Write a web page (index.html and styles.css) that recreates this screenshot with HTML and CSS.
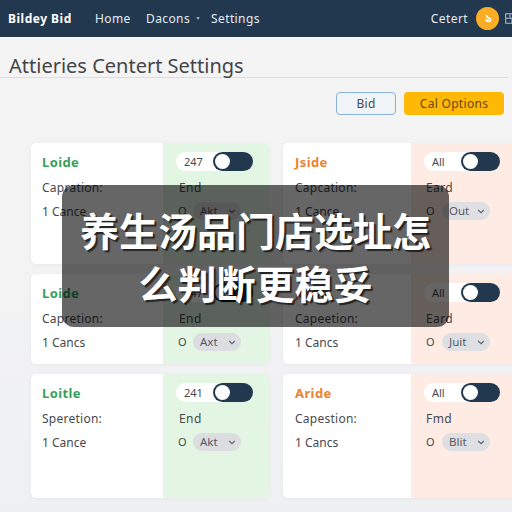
FILE: index.html
```
<!DOCTYPE html>
<html lang="zh">
<head>
<meta charset="utf-8">
<title>Attieries Centert Settings</title>
<link rel="stylesheet" href="styles.css">
</head>
<body>
<div class="page">
  <nav class="nav">
    <span class="brand">Bildey Bid</span>
    <span class="link home">Home</span>
    <span class="link decons">Dacons</span>
    <svg class="nav-caret" viewBox="0 0 5 4"><path d="M.3 .4H4.7L2.5 3.6Z" fill="#b9c9d9"/></svg>
    <span class="link">Settings</span>
    <span class="link account">Cetert</span>
    <span class="avatar"><svg viewBox="0 0 10 10"><path d="M3.2 1.6 5.4 4.2M5.2 4.4C7 4 7.9 5.2 7.6 6.4 7.1 8.1 4.2 8 2.9 6.2L5 6.2" fill="none" stroke="#fff" stroke-width="1.5" stroke-linecap="round"/></svg></span>
    <svg class="grid-icon" viewBox="0 0 11 11"><path d="M10.5 .7H.7V10.3H10.5M.7 5.3H10.5M5 .7V5.3M7 5.3V10.3" fill="none" stroke="#a9bccd" stroke-width="1.1"/></svg>
  </nav>
  <h1 class="title"><span>Attieries Centert Settings</span></h1>
  <div class="actions">
    <button class="btn outline">Bid</button>
    <button class="btn solid">Cal Options</button>
  </div>
  <main class="cards">
    <section class="card green">
      <div class="info"><h2>Loide</h2><p>Capration:</p><p class="count">1 Cance</p></div>
      <div class="side"><div class="switch"><span>247</span><i class="toggle"></i></div><p>End</p>
        <div class="pick"><b>O</b><span class="pill">Akt<svg viewBox="0 0 8 5"><path d="M1.2 1 4 3.7 6.8 1"/></svg></span></div></div>
    </section>
    <section class="card orange">
      <div class="info"><h2>Jside</h2><p>Capcation:</p><p class="count">1 Cance</p></div>
      <div class="side"><div class="switch"><span>All</span><i class="toggle"></i></div><p>Eard</p>
        <div class="pick"><b>O</b><span class="pill">Out<svg viewBox="0 0 8 5"><path d="M1.2 1 4 3.7 6.8 1"/></svg></span></div></div>
    </section>
    <section class="card green">
      <div class="info"><h2>Loide</h2><p>Capretion:</p><p class="count">1 Cancs</p></div>
      <div class="side"><div class="switch"><span>247</span><i class="toggle"></i></div><p>End</p>
        <div class="pick"><b>O</b><span class="pill">Axt<svg viewBox="0 0 8 5"><path d="M1.2 1 4 3.7 6.8 1"/></svg></span></div></div>
    </section>
    <section class="card orange">
      <div class="info"><h2>Jside</h2><p>Capeetion:</p><p class="count">1 Cancs</p></div>
      <div class="side"><div class="switch"><span>All</span><i class="toggle"></i></div><p>Eard</p>
        <div class="pick"><b>O</b><span class="pill">Juit<svg viewBox="0 0 8 5"><path d="M1.2 1 4 3.7 6.8 1"/></svg></span></div></div>
    </section>
    <section class="card green">
      <div class="info"><h2>Loitle</h2><p>Speretion:</p><p class="count">1 Cance</p></div>
      <div class="side"><div class="switch"><span>241</span><i class="toggle"></i></div><p>End</p>
        <div class="pick"><b>O</b><span class="pill">Akt<svg viewBox="0 0 8 5"><path d="M1.2 1 4 3.7 6.8 1"/></svg></span></div></div>
    </section>
    <section class="card orange">
      <div class="info"><h2>Aride</h2><p>Capestion:</p><p class="count">1 Cancs</p></div>
      <div class="side"><div class="switch"><span>All</span><i class="toggle"></i></div><p>Fmd</p>
        <div class="pick"><b>O</b><span class="pill">Blit<svg viewBox="0 0 8 5"><path d="M1.2 1 4 3.7 6.8 1"/></svg></span></div></div>
    </section>
  </main>
  <div class="caption">养生汤品门店选址怎<br>么判断更稳妥</div>
</div>
</body>
</html>
```
FILE: styles.css
```
* { box-sizing: border-box; }
body { margin: 0; font-family: "Noto Sans", sans-serif; }
h1, h2, p { margin: 0; }
.page {
  position: relative; width: 512px; height: 512px; overflow: hidden;
  background: linear-gradient(#f4f4f4, #f3f3f4 50%, #eff0f2);
  color: #48494d;
}
.nav {
  display: flex; align-items: center; height: 37px; padding: 0 0 0 8px;
  background: #22384f; color: #e4ebf2; font-size: 12px; white-space: nowrap;
}
.nav > * { flex: none; }
.brand { width: 87px; font-weight: 700; font-size: 12px; letter-spacing: .5px; color: #fff; }
.link { letter-spacing: .4px; }
.home { width: 51px; }
.decons { width: 50px; }
.nav-caret { width: 4px; height: 3px; margin-right: 11px; }
.account { margin-left: auto; }
.avatar {
  display: flex; align-items: center; justify-content: center;
  width: 23px; height: 23px; margin: 0 6px 0 8px; border-radius: 50%; background: #fbae25;
}
.avatar svg { width: 10px; height: 10px; }
.grid-icon { width: 11px; height: 11px; margin-right: -4px; }
.title {
  height: 41px; margin-right: 4px; padding: 14px 0 0 9px;
  border-bottom: 1px solid #dcddde;
  font-weight: 400; font-size: 20px; line-height: 30px; color: #454547; white-space: nowrap;
}
.actions { display: flex; justify-content: flex-end; gap: 8px; margin-top: 14px; padding-right: 8px; }
.btn {
  height: 23px; padding: 0; border-radius: 4px; font: 12px "Noto Sans", sans-serif;
  letter-spacing: .3px; line-height: 21px;
}
.outline { width: 60px; border: 1px solid #8bb1d8; background: #f1f4f7; color: #444b55; }
.solid { width: 100px; border: 0; background: #feb906; color: #684817; }
.cards {
  display: grid; grid-template-columns: 238px 238px; grid-template-rows: 121px 90px 124px;
  gap: 10px 14px; margin: 28px 0 0 31px;
}
.card {
  display: flex; overflow: hidden; border-radius: 5px; background: #fff;
  box-shadow: 0 1px 4px rgba(40, 50, 60, .05); font-size: 12px; line-height: 20px; white-space: nowrap;
}
.info { width: 132px; padding: 9px 0 0 11px; }
.side { flex: 1; padding: 9px 0 0 13px; background: #e3f5e3; }
.orange .info { width: 128px; padding-left: 12px; }
.orange .side { background: #feebe4; }
h2 { height: 26px; font-size: 13px; line-height: 20px; letter-spacing: .4px; color: #35a15a; }
.orange h2 { color: #ec8130; }
.info p { height: 24px; letter-spacing: .25px; }
.info .count { letter-spacing: 0; }
.side p { height: 24px; padding-left: 3px; letter-spacing: .4px; }
.orange .side p { padding-left: 2px; }
.switch {
  display: flex; align-items: center; justify-content: space-between;
  width: 77px; height: 19px; margin-bottom: 7px; padding-left: 8px;
  border-radius: 10px; background: linear-gradient(90deg, #fff 60%, transparent 60%); font-size: 11px;
}
.toggle { width: 40px; height: 19px; padding: 2px; border-radius: 10px; background: #22384f; }
.toggle::before { content: ""; display: block; width: 15px; height: 15px; border-radius: 50%; background: #fff; }
.orange .switch { width: 76px; }
.orange .toggle { width: 39px; }
.pick { display: flex; align-items: center; height: 18px; padding-left: 2px; }
.pick b { width: 15px; font-weight: 400; font-size: 11px; }
.orange .pick b { width: 16px; }
.pill {
  display: flex; align-items: center; justify-content: space-between;
  width: 48px; height: 18px; padding: 0 5px 0 7px; border-radius: 9px;
  background: #dddfe2; color: #575865; font-size: 11.5px;
}
.green .pill { background: #dcdde1; }
.pill svg { width: 8px; height: 5px; fill: none; stroke: #606672; stroke-width: 1.2; }
.caption {
  position: absolute; left: 62px; top: 185px; width: 387px; height: 142px;
  padding-top: 18px; border-radius: 12px; background: rgba(0, 0, 0, .6);
  color: #fff; font: 700 39px/53px "Noto Sans CJK SC", sans-serif;
  text-align: center; text-shadow: 2px 2px 1px rgba(0, 0, 0, .65);
}
```
